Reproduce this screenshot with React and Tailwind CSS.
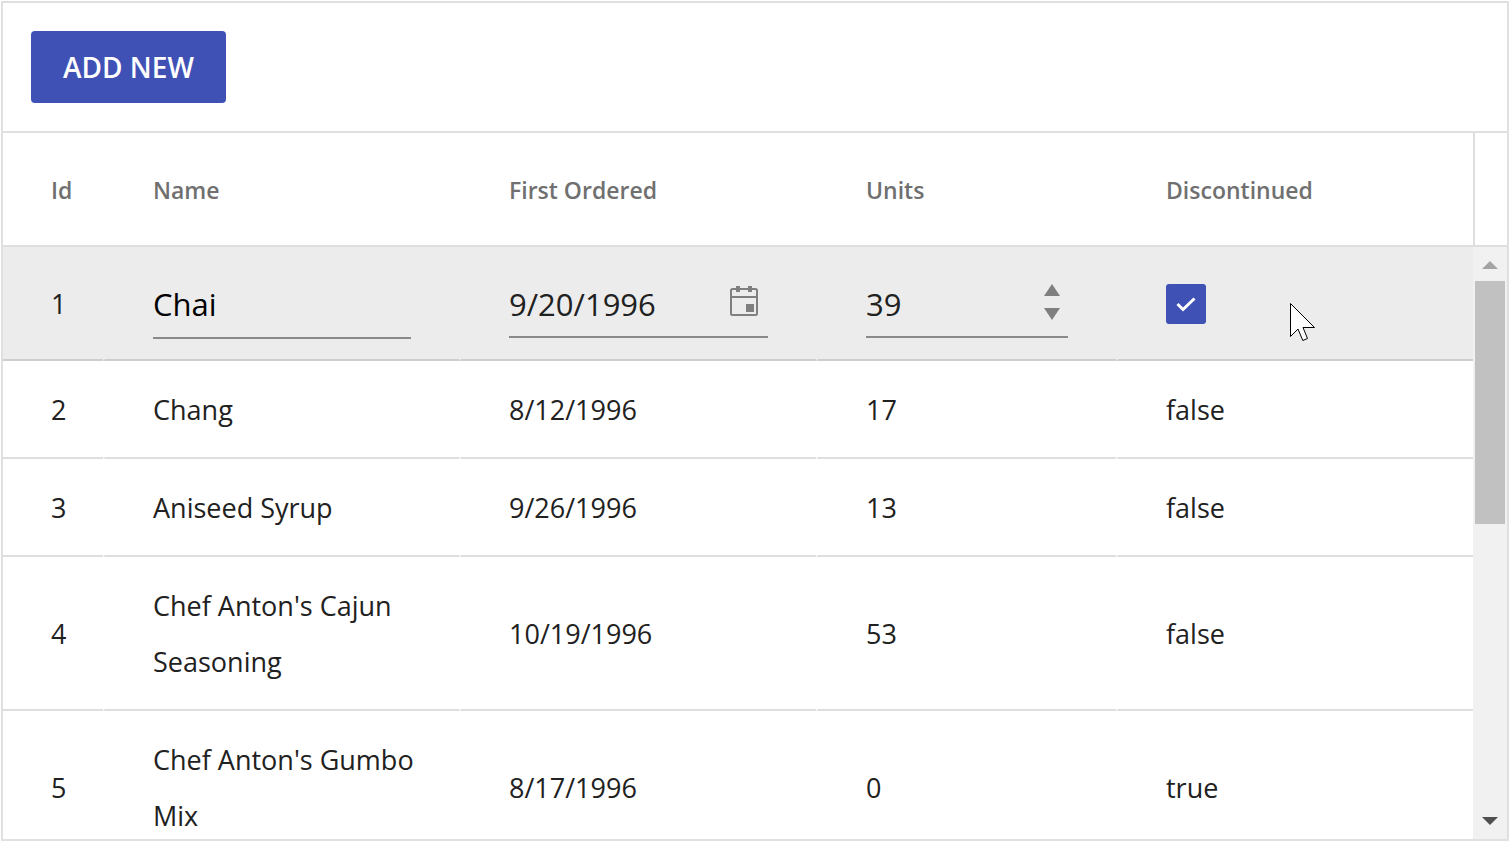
import React, { useState } from "react";

const rows = [
  { id: 2, name: "Chang", date: "8/12/1996", units: 17, discontinued: "false" },
  { id: 3, name: "Aniseed Syrup", date: "9/26/1996", units: 13, discontinued: "false" },
  { id: 4, name: "Chef Anton's Cajun Seasoning", date: "10/19/1996", units: 53, discontinued: "false" },
  { id: 5, name: "Chef Anton's Gumbo Mix", date: "8/17/1996", units: 0, discontinued: "true" },
];

const headings = ["Id", "Name", "First Ordered", "Units", "Discontinued"];

function CalendarIcon() {
  return (
    <svg width="28" height="30" viewBox="0 0 28 30" className="block" aria-hidden="true">
      <rect x="1" y="3" width="26" height="26" rx="1.5" fill="none" stroke="#7f7f7f" strokeWidth="2" />
      <path d="M1 11H27" stroke="#7f7f7f" strokeWidth="2" />
      <path d="M6 0H10V6H6ZM18 0H22V6H18ZM16 18H24V26H16Z" fill="#7f7f7f" />
    </svg>
  );
}

function Pointer() {
  return (
    <svg
      className="pointer-events-none absolute top-14 left-[172px]"
      width="26"
      height="39"
      viewBox="0 0 26 39"
      aria-hidden="true"
    >
      <path
        d="M0.5 0.5V33.5L8 26L12.8 37.5L17.5 35.5L13 24.5H24.5Z"
        fill="#fff"
        stroke="#000"
        strokeWidth="1"
      />
    </svg>
  );
}

function Cell({ first, editing, className = "", children }) {
  return (
    <td
      className={
        (first ? "" : "border-l-2 border-l-transparent ") +
        (editing ? "border-b-[#cecece] " : "border-b-[#dedede] ") +
        "border-b-2 pt-[21px] pb-[19px] pl-12 " +
        className
      }
    >
      {children}
    </td>
  );
}

function EditRow() {
  const [name, setName] = useState("Chai");
  const [date, setDate] = useState("9/20/1996");
  const [units, setUnits] = useState(39);
  const [gone, setGone] = useState(true);
  return (
    <tr className="h-[114px] bg-[#ececec]">
      <Cell editing first>1</Cell>
      <Cell editing className="pr-12 align-top">
        <input
          aria-label="Name"
          value={name}
          onChange={(e) => setName(e.target.value)}
          className="block h-[71px] w-full border-b-2 border-[#8a8a8a] bg-transparent pt-0.5 text-[31px] text-black outline-none"
        />
      </Cell>
      <Cell editing className="pr-12 align-top">
        <div className="flex h-[70px] items-center border-b-2 border-[#8a8a8a] pr-2.5">
          <input
            aria-label="First Ordered"
            value={date}
            onChange={(e) => setDate(e.target.value)}
            className="h-full min-w-0 flex-1 bg-transparent pt-1 text-[31px] outline-none"
          />
          <button type="button" aria-label="Open calendar" className="pb-0.5">
            <CalendarIcon />
          </button>
        </div>
      </Cell>
      <Cell editing className="pr-12 align-top">
        <div className="flex h-[70px] items-center border-b-2 border-[#8a8a8a] pr-2">
          <input
            aria-label="Units"
            value={units}
            onChange={(e) => setUnits(Number(e.target.value) || 0)}
            className="h-full min-w-0 flex-1 bg-transparent pt-1 text-[31px] outline-none"
          />
          <div className="flex flex-col gap-3">
            <button type="button" aria-label="Increase units" onClick={() => setUnits(units + 1)}>
              <svg width="16" height="12" viewBox="0 0 16 12" className="block">
                <path d="M8 0L16 12H0Z" fill="#7f7f7f" />
              </svg>
            </button>
            <button type="button" aria-label="Decrease units" onClick={() => setUnits(units - 1)}>
              <svg width="16" height="12" viewBox="0 0 16 12" className="block">
                <path d="M0 0H16L8 12Z" fill="#7f7f7f" />
              </svg>
            </button>
          </div>
        </div>
      </Cell>
      <Cell editing className="relative">
        <label className="relative block size-10">
          <input
            type="checkbox"
            aria-label="Discontinued"
            checked={gone}
            onChange={(e) => setGone(e.target.checked)}
            className="block size-10 appearance-none rounded-[3px] border-2 border-[#3f51b5] checked:bg-[#3f51b5]"
          />
          <svg
            className="pointer-events-none absolute inset-0"
            width="40"
            height="40"
            viewBox="0 0 40 40"
            aria-hidden="true"
          >
            <path d="M11.5 20L17 25.5L28.5 14.5" fill="none" stroke="#fff" strokeWidth="3" />
          </svg>
        </label>
        <Pointer />
      </Cell>
    </tr>
  );
}

function ScrollTrack() {
  return (
    <div className="flex min-h-0 flex-1 flex-col items-center bg-[#f1f1f1]">
      <button type="button" aria-label="Scroll up" className="flex h-[34px] w-full shrink-0 items-center justify-center pt-0.5">
        <svg width="16" height="8" viewBox="0 0 16 8">
          <path d="M8 0L16 8H0Z" fill="#a3a3a3" />
        </svg>
      </button>
      <div className="flex w-full flex-1 flex-col items-center">
        <div className="h-[243px] w-[30px] bg-[#c1c1c1]" />
      </div>
      <button type="button" aria-label="Scroll down" className="flex h-[34px] w-full shrink-0 items-center justify-center pb-0.5">
        <svg width="16" height="8" viewBox="0 0 16 8">
          <path d="M0 0H16L8 8Z" fill="#505050" />
        </svg>
      </button>
    </div>
  );
}

export default function App() {
  return (
    <div className="h-screen bg-white p-px font-['Open_Sans','Noto_Sans',sans-serif] text-[#212121]">
      <main className="flex h-full flex-col border-2 border-[#e0e0e0]">
        <div className="border-b-2 border-[#e0e0e0] p-7">
          <button
            type="button"
            className="flex h-[72px] items-center rounded-[4px] bg-[#3f51b5] px-8 text-[28px] font-semibold text-white"
          >
            ADD NEW
          </button>
        </div>
        <div className="flex min-h-0 flex-1">
          <div className="min-w-0 flex-1 overflow-hidden">
            <table className="w-full table-fixed border-separate border-spacing-0 text-[27px] leading-[56px]">
              <colgroup>
                <col className="w-[100px]" />
                <col className="w-[356px]" />
                <col />
                <col className="w-[300px]" />
                <col />
              </colgroup>
              <thead>
                <tr>
                  {headings.map((h, i) => (
                    <th
                      key={h}
                      scope="col"
                      className={
                        "h-[114px] border-b-2 border-[#dedede] pt-0.5 text-left text-[23px] font-semibold text-[#707070] " +
                        (i === 0 ? "pl-12" : "pl-[50px]")
                      }
                    >
                      {h}
                    </th>
                  ))}
                </tr>
              </thead>
              <tbody>
                <EditRow />
                {rows.map((r) => (
                  <tr key={r.id}>
                    <Cell first>{r.id}</Cell>
                    <Cell className="pr-6">{r.name}</Cell>
                    <Cell>{r.date}</Cell>
                    <Cell>{r.units}</Cell>
                    <Cell>{r.discontinued}</Cell>
                  </tr>
                ))}
              </tbody>
            </table>
          </div>
          <div className="flex w-[34px] shrink-0 flex-col">
            <div className="h-[114px] shrink-0 border-b-2 border-l-2 border-[#dedede]" />
            <ScrollTrack />
          </div>
        </div>
      </main>
    </div>
  );
}
